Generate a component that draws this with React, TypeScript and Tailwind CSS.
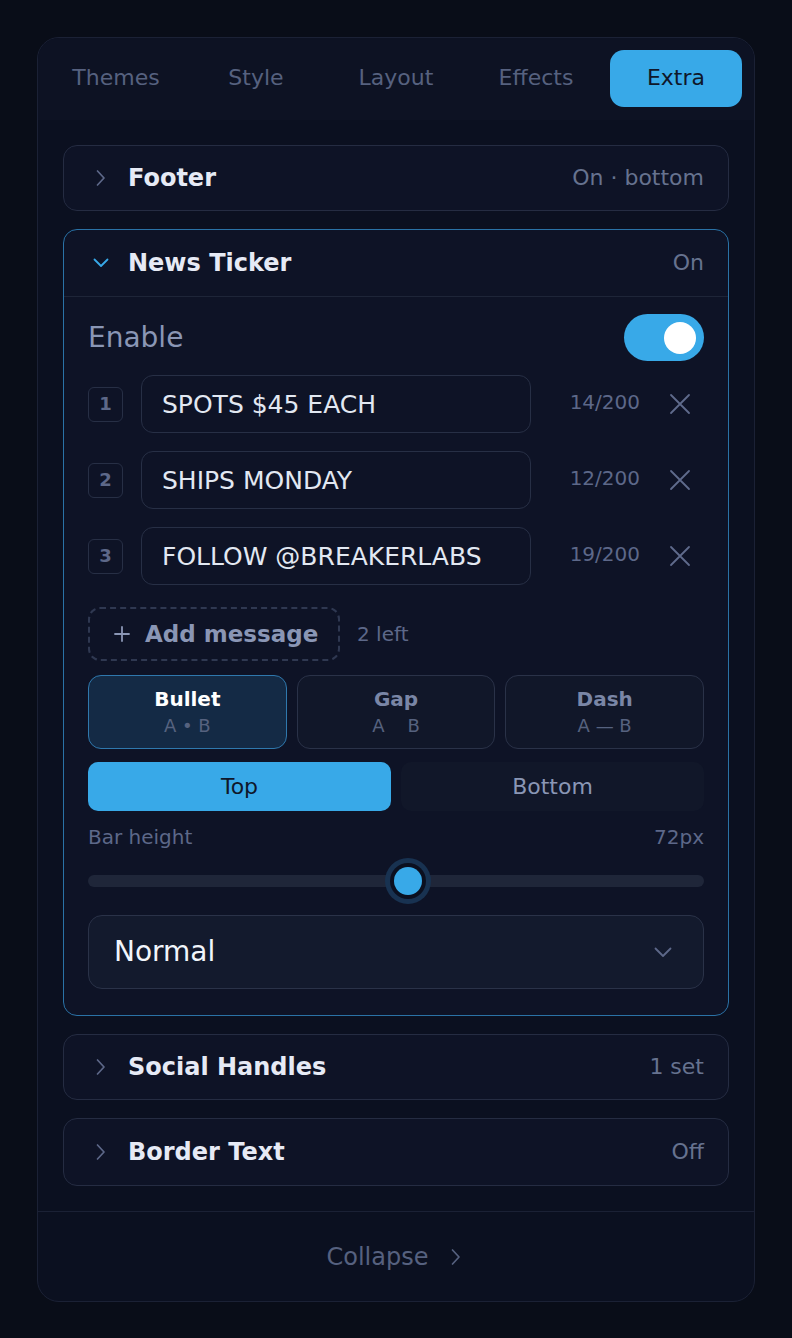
import React from "react";

const ChevronRight = ({ color }: { color: string }) => (
  <svg width="20" height="20" viewBox="0 0 20 20" fill="none" stroke={color} strokeWidth="1.7" strokeLinecap="round" strokeLinejoin="round">
    <path d="M6.5 3 L13 10 L6.5 17" />
  </svg>
);

const ChevronDown = ({ color, big }: { color: string; big?: boolean }) => (
  <svg width="20" height="20" viewBox="0 0 20 20" fill="none" stroke={color} strokeWidth="1.8" strokeLinecap="round" strokeLinejoin="round">
    {big ? <path d="M2.5 6.5 L10 14 L17.5 6.5" /> : <path d="M3.5 6.5 L10 13 L16.5 6.5" />}
  </svg>
);

const XIcon = () => (
  <svg width="22" height="22" viewBox="0 0 22 22" fill="none" stroke="#5f6b8c" strokeWidth="1.8" strokeLinecap="round">
    <path d="M2 2 L20 20 M20 2 L2 20" />
  </svg>
);

const CollapsedCard = ({ title, right, tall }: { title: string; right: string; tall?: boolean }) => (
  <div className={`flex items-center rounded-[14px] border border-[#252c42] bg-[#0e1326] pl-[27px] pr-6 ${tall ? "h-[68px]" : "h-[66px]"}`}>
    <div className="flex w-[20px] justify-center">
      <ChevronRight color="#5d6889" />
    </div>
    <div className="ml-[17px] text-[24px] font-bold leading-none text-[#e6eaf5]">{title}</div>
    <div className="ml-auto text-[22px] leading-none text-[#66728f]">{right}</div>
  </div>
);

const rows = [
  { n: "1", text: "SPOTS $45 EACH", count: "14/200" },
  { n: "2", text: "SHIPS MONDAY", count: "12/200" },
  { n: "3", text: "FOLLOW @BREAKERLABS", count: "19/200" },
];

export default function App() {
  const tabs = ["Themes", "Style", "Layout", "Effects", "Extra"];
  return (
    <div
      className="min-h-screen bg-[#090d18] pt-[37px] pb-[37px]"
      style={{ fontFamily: '"DejaVu Sans", "Noto Sans", sans-serif' }}
    >
      <div className="mx-auto w-[718px] overflow-hidden rounded-[22px] border border-[#1b2135] bg-[#0b1020]">
        {/* Tabs */}
        <div className="grid grid-cols-5 gap-[8px] bg-[#0d1223] px-3 pt-3 pb-[13px]">
          {tabs.map((t) => (
            <div
              key={t}
              className={`flex h-[57px] items-center justify-center rounded-[14px] pb-[2px] text-[22px] leading-none ${
                t === "Extra" ? "bg-[#38a9e8] text-[#0f172a]" : "text-[#56617f]"
              }`}
            >
              {t}
            </div>
          ))}
        </div>

        {/* Content */}
        <div className="flex flex-col gap-[18px] pl-[25px] pr-[25px] pt-[25px] pb-[25px]">
          <CollapsedCard title="Footer" right="On · bottom" />

          {/* News Ticker */}
          <div className="rounded-[14px] border border-[#2a72a6] bg-[#0e1326]">
            <div className="flex h-[67px] items-center border-b border-[#1e2538] pl-[27px] pr-6">
              <div className="flex w-[20px] justify-center">
                <ChevronDown color="#38a9e8" />
              </div>
              <div className="ml-[17px] text-[24px] font-bold leading-none text-[#e6eaf5]">News Ticker</div>
              <div className="ml-auto text-[22px] leading-none text-[#66728f]">On</div>
            </div>

            <div className="pl-6 pr-6 pt-[17px] pb-[26px]">
              {/* Enable */}
              <div className="flex items-center justify-between">
                <div className="text-[28px] leading-none text-[#8a96b5]">Enable</div>
                <div className="flex h-[47px] w-[80px] items-center justify-end rounded-full bg-[#38a9e8] pr-[8px]">
                  <div className="h-[32px] w-[32px] rounded-full bg-white" />
                </div>
              </div>

              {/* Messages */}
              <div className="mt-[14px] flex flex-col gap-[18px]">
                {rows.map((r) => (
                  <div key={r.n} className="flex items-center">
                    <div className="flex h-[35px] w-[35px] items-center justify-center rounded-[6px] border border-[#272f45] text-[18px] font-bold leading-none text-[#5d6889]">
                      {r.n}
                    </div>
                    <div className="ml-[18px] flex h-[58px] w-[390px] items-center rounded-[12px] border border-[#272f45] px-[20px] text-[25px] leading-none text-[#e2e8f2]">
                      {r.text}
                    </div>
                    <div className="flex-1 pr-4 pb-[4px] text-right text-[20px] leading-none text-[#5d6889]">{r.count}</div>
                    <div className="flex w-[48px] justify-center">
                      <XIcon />
                    </div>
                  </div>
                ))}
              </div>

              {/* Add message */}
              <div className="mt-[22px] flex items-center">
                <div className="flex h-[54px] w-[252px] items-center rounded-[12px] border-2 border-dashed border-[#2f3851] pl-[23px]">
                  <svg width="18" height="18" viewBox="0 0 18 18" fill="none" stroke="#8a96b5" strokeWidth="1.8" strokeLinecap="round">
                    <path d="M9 2 V16 M2 9 H16" />
                  </svg>
                  <span className="ml-[14px] text-[23px] font-bold leading-none text-[#8a96b5]">Add message</span>
                </div>
                <span className="ml-[17px] text-[20px] leading-none text-[#5d6889]">2 left</span>
              </div>

              {/* Separators */}
              <div className="mt-[14px] grid grid-cols-3 gap-[10px]">
                <div className="flex h-[74px] flex-col items-center justify-center gap-[8px] rounded-[13px] border-[1.5px] border-[#2f78ad] bg-[#142a45]">
                  <div className="text-[20px] font-bold leading-none text-white">Bullet</div>
                  <div className="text-[18px] leading-none text-[#56627f]">A • B</div>
                </div>
                <div className="flex h-[74px] flex-col items-center justify-center gap-[8px] rounded-[13px] border-[1.5px] border-[#2a3248] bg-[#111729]">
                  <div className="text-[20px] font-bold leading-none text-[#7a86a6]">Gap</div>
                  <div className="whitespace-pre text-[18px] leading-none text-[#56627f]">{"A    B"}</div>
                </div>
                <div className="flex h-[74px] flex-col items-center justify-center gap-[8px] rounded-[13px] border-[1.5px] border-[#2a3248] bg-[#111729]">
                  <div className="text-[20px] font-bold leading-none text-[#7a86a6]">Dash</div>
                  <div className="text-[18px] leading-none text-[#56627f]">A — B</div>
                </div>
              </div>

              {/* Position */}
              <div className="mt-[13px] grid grid-cols-2 gap-[10px]">
                <div className="flex h-[49px] items-center justify-center rounded-[10px] bg-[#38a9e8] text-[22px] leading-none text-[#0f172a]">
                  Top
                </div>
                <div className="flex h-[49px] items-center justify-center rounded-[10px] bg-[#111729] text-[22px] leading-none text-[#8a96b5]">
                  Bottom
                </div>
              </div>

              {/* Bar height */}
              <div className="mt-[16px] flex items-center justify-between text-[20px] leading-none text-[#5d6889]">
                <span>Bar height</span>
                <span>72px</span>
              </div>
              <div className="relative mt-[11px] flex h-[46px] items-center">
                <div className="h-[12px] w-full rounded-full bg-[#1f2639]" />
                <div
                  className="absolute top-0 flex h-[46px] w-[46px] -translate-x-1/2 items-center justify-center rounded-full bg-[#183251]"
                  style={{ left: "51.9%" }}
                >
                  <div className="flex h-[36px] w-[36px] items-center justify-center rounded-full bg-[#0b1020]">
                    <div className="h-[28px] w-[28px] rounded-full bg-[#38a9e8]" />
                  </div>
                </div>
              </div>

              {/* Select */}
              <div className="mt-[11px] flex h-[74px] items-center justify-between rounded-[14px] border border-[#2a3248] bg-[#131a2d] pl-[25px] pr-[30px]">
                <span className="text-[28px] leading-none text-[#f1f5fb]">Normal</span>
                <ChevronDown color="#5d6889" big />
              </div>
            </div>
          </div>

          <CollapsedCard title="Social Handles" right="1 set" />
          <CollapsedCard title="Border Text" right="Off" tall />
        </div>

        {/* Collapse */}
        <div className="flex h-[90px] items-center justify-center border-t border-[#1b2135]">
          <span className="text-[24px] leading-none text-[#56617f]">Collapse</span>
          <div className="ml-[17px]">
            <ChevronRight color="#56617f" />
          </div>
        </div>
      </div>
    </div>
  );
}
